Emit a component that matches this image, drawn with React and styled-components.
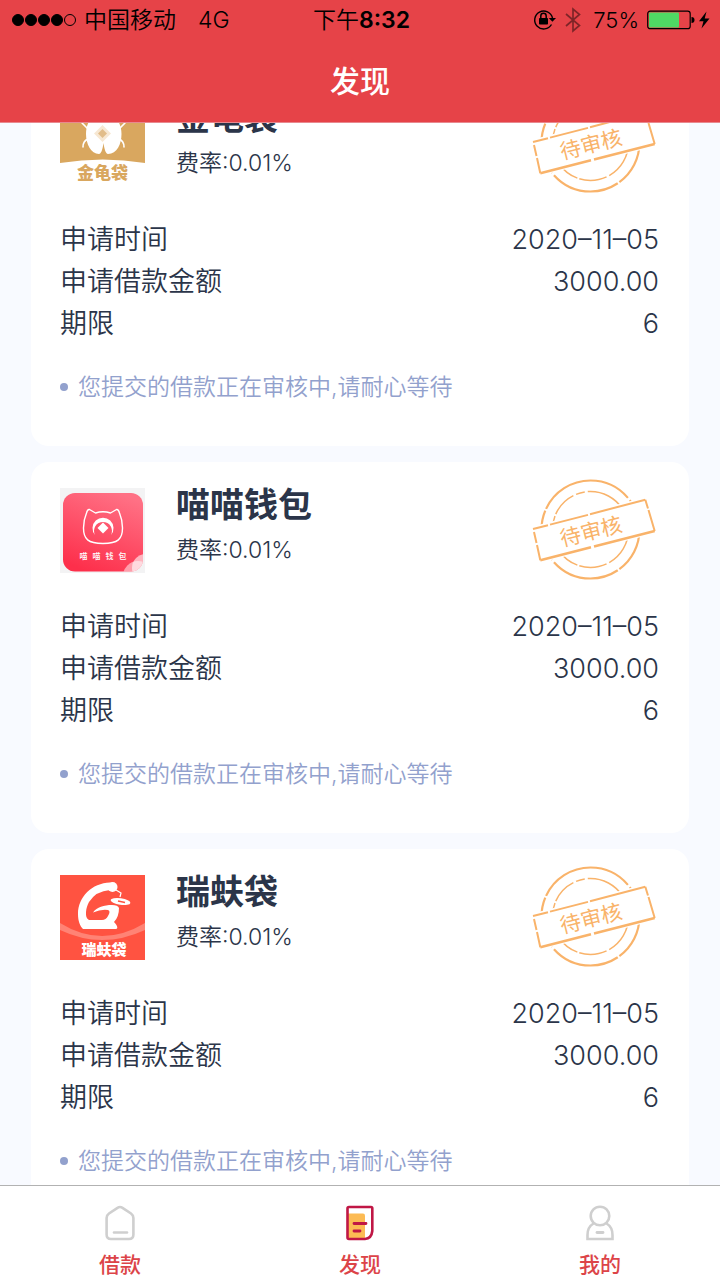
import React, { useLayoutEffect, useRef } from 'react';
import styled, { createGlobalStyle } from 'styled-components';

const records = [
    { id: 1, name: '金龟袋', logo: BeetleLogo },
    { id: 2, name: '喵喵钱包', logo: CatLogo },
    { id: 3, name: '瑞蚨袋', logo: RuifuLogo },
].map(item => ({
    ...item,
    rate: '0.01%',
    date: '2020–11–05',
    amount: '3000.00',
    term: '6',
}));

function BeetleLogo() {
    return (
        <Logo viewBox="0 0 85 85" aria-hidden="true">
            <rect width="85" height="85" fill="#fff" />
            <path d="M0 0H85V62Q43 55 0 62Z" fill="#d9a75f" />
            <g fill="none" stroke="#fff" strokeWidth="1.6" strokeLinecap="round">
                <path d="M29 20L25 14M28 28L22 22M28 38Q23 40 23 46" />
                <path d="M58 20L61 14M59 28L65 22M59 38Q64 40 64 46" />
            </g>
            <path d="M43.500 10C32 12 26 22 26 33C26 43 31 53 39 53C41 53 42.500 49 43.500 42C44.500 49 46 53 48 53C57 53 61.500 43 61.500 33C61.500 22 55 12 43.500 10Z" fill="#fff" />
            <path d="M42.500 24L51 32.500L42.500 41L34 32.500Z" fill="#f7e8d3" />
            <path d="M42.500 28L47 32.500L42.500 37L38 32.500Z" fill="#e2bd8a" />
            <LogoText x="42.500" y="78" $size={17} fill="#d9a75f">金龟袋</LogoText>
        </Logo>
    );
}

function CatLogo() {
    return (
        <Logo viewBox="0 0 85 85" aria-hidden="true">
            <defs>
                <linearGradient id="catBg" x1="0.700" y1="0" x2="0.300" y2="1">
                    <stop offset="0" stopColor="#ff7185" />
                    <stop offset="1" stopColor="#fd2f4b" />
                </linearGradient>
                <clipPath id="catClip">
                    <rect x="3" y="5" width="80" height="78.500" rx="12" />
                </clipPath>
            </defs>
            <rect width="85" height="85" fill="#f3f3f4" />
            <rect x="3" y="5" width="80" height="78.500" rx="12" fill="url(#catBg)" />
            <g clipPath="url(#catClip)">
                <circle cx="78" cy="88" r="15" fill="#fff" opacity="0.500" />
                <circle cx="86" cy="80" r="14" fill="#fff" opacity="0.600" />
            </g>
            <path d="M29.500 21.500Q27.500 21 26.500 25Q23.500 32 23.500 40C23.500 51 28 55.500 43 55.500C58 55.500 62.500 51 62.500 40Q62.500 32 59.500 25Q58.500 21 56.500 21.500L50.500 25Q43 22.500 35.500 25Z" fill="none" stroke="#fff" strokeWidth="1.400" strokeLinejoin="round" />
            <path d="M35 47A10.500 10.500 0 1 1 51 47A9 9 0 1 0 35 47Z" fill="#fff" />
            <path d="M43 34.500L48.500 40L43 45.500L37.500 40Z" fill="#fff" />
            <LogoText x="23.500 36.500 49.500 62.500" y="71" $size={8} $weight={500} fill="#fff">喵喵钱包</LogoText>
        </Logo>
    );
}

function RuifuLogo() {
    return (
        <Logo viewBox="0 0 85 85" aria-hidden="true">
            <rect width="85" height="85" fill="#ff5341" />
            <path d="M0 48Q42 74 85 48V55Q42 75 0 55Z" fill="#ff8375" />
            <path d="M50 7.500C32 8 18 22 18 39C18 46 20 51 23 54H56C58 54 58 51 54 47Q59 42 59 33Q58 30 52 30C44 30 37 32 33 37.500Q41 34 48 35Q51 36 48 41Q46 45 42 45H29C24 43 26 32 29 27Q36 16 50 15Z" fill="#fff" />
            <circle cx="52.500" cy="12" r="5" fill="#fff" />
            <path d="M56 15L61 18L60 22" fill="none" stroke="#fff" strokeWidth="1.200" />
            <ellipse cx="60.500" cy="26.500" rx="10" ry="3.300" transform="rotate(8 60.500 26.500)" fill="#fff" />
            <path d="M58 26L65 27.500" stroke="#ff5341" strokeWidth="1.500" />
            <LogoText x="44" y="80" $size={15} fill="#fff">瑞蚨袋</LogoText>
        </Logo>
    );
}

const Stamp = () => (
    <StampSvg viewBox="-2 0 128 111" role="img" aria-label="待审核">
        <g fill="none" stroke="#f9b36a">
            <circle cx="57.500" cy="54.500" r="49" strokeWidth="2.200" strokeDasharray="46 2 70 3 52 2 98 3" />
            <circle cx="57.500" cy="54.500" r="38" strokeWidth="1.500" strokeDasharray="40 3 28 2 60 2 26 3 9 3" />
        </g>
        <path d="M0 54L112.300 24.700L121.700 56L7.300 85.300Z" fill="#fff" stroke="#fff" strokeWidth="5" />
        <g fill="none" stroke="#f9b36a" strokeWidth="2">
            <path d="M0 54L15 50.300M17 49.600L55 39.900M57 39.200L112.300 24.700" />
            <path d="M112.300 24.700L115 33.500M115.500 35L121.700 56" />
            <path d="M121.700 56L61 71.500M58 72.300L7.300 85.300" strokeWidth="2.500" />
            <path d="M1 57L3.500 68M4 70L7.300 85.300" />
        </g>
        <StampText x="58" y="64" transform="rotate(-14 58 56)">待审核</StampText>
    </StampSvg>
);

const StatusIcons = () => (
    <>
        <svg width="24" height="24" viewBox="0 0 24 24" aria-hidden="true">
            <path d="M18.500 16.500A9 9 0 1 1 19.500 10" fill="none" stroke="#000" strokeWidth="1.400" />
            <path d="M15.800 10H23L19.400 13.800Z" />
            <rect x="6" y="10" width="9" height="6.500" rx="0.800" />
            <path d="M7.800 10V8A2.700 2.700 0 0 1 13.200 8V10" fill="none" stroke="#000" strokeWidth="1.500" />
        </svg>
        <svg width="16" height="26" viewBox="0 0 16 26" aria-hidden="true">
            <path d="M1 7L14.500 18.500L8 24V2L14.500 7.500L1 19" fill="none" stroke="#000" strokeOpacity="0.450" strokeWidth="1.700" />
        </svg>
    </>
);

const Battery = () => (
    <svg width="64" height="20" viewBox="0 0 64 20" aria-hidden="true">
        <rect x="0.700" y="1.200" width="42.500" height="17.500" rx="2.500" fill="none" stroke="#000" strokeWidth="1.200" />
        <rect x="2" y="2.500" width="30" height="15" rx="1" fill="#4fd964" />
        <path d="M44.500 7Q47.500 7 47.500 10Q47.500 13 44.500 13Z" />
        <path d="M59.500 1.500L52 11.200H56.500L54.500 18.500L62.500 8.500H57.700Z" />
    </svg>
);

const HomeIcon = () => (
    <TabSvg viewBox="0 0 32 36" aria-hidden="true">
        <path d="M13.500 2.800Q16 1.300 18.500 2.800L27 8.500Q29.400 10.300 29.400 13V29.500Q29.400 34 25 34H7Q2.600 34 2.600 29.500V13Q2.600 10.300 5 8.500Z" fill="none" stroke="#cfcfcf" strokeWidth="2.600" />
        <path d="M10 27.500H23" stroke="#cfcfcf" strokeWidth="2.600" strokeLinecap="round" />
    </TabSvg>
);

const FindIcon = () => (
    <TabSvg viewBox="0 0 32 36" aria-hidden="true">
        <path d="M4 8.500H19Q21 8.500 21 10.500V33H4Z" fill="#fcbb54" />
        <path d="M5 2H27Q28.300 2 28.300 3.300V26Q27.500 33.500 21 34H5Q3.500 34 3.500 32.500V3.500Q3.500 2 5 2Z" fill="none" stroke="#c01745" strokeWidth="2.600" />
        <path d="M10 18.500H22M10 26H16" stroke="#c01745" strokeWidth="2.800" strokeLinecap="round" />
    </TabSvg>
);

const MineIcon = () => (
    <TabSvg viewBox="0 0 32 36" aria-hidden="true">
        <circle cx="16" cy="11" r="9.300" fill="none" stroke="#cfcfcf" strokeWidth="2.600" />
        <path d="M9.500 18.500Q3.500 22 3.500 30V34H28.500V30Q28.500 22 22.500 18.500" fill="none" stroke="#cfcfcf" strokeWidth="2.600" />
        <path d="M13 27.500H19" stroke="#cfcfcf" strokeWidth="2.800" strokeLinecap="round" />
    </TabSvg>
);

const LoanCard = ({ record }) => {
    const RecordLogo = record.logo;
    return (
        <Card>
            <CardHead>
                <RecordLogo />
                <Titles>
                    <Name>{record.name}</Name>
                    <Rate>费率:{record.rate}</Rate>
                </Titles>
                <Stamp />
            </CardHead>
            <Details>
                <Row><dt>申请时间</dt><dd>{record.date}</dd></Row>
                <Row><dt>申请借款金额</dt><dd>{record.amount}</dd></Row>
                <Row><dt>期限</dt><dd>{record.term}</dd></Row>
            </Details>
            <Notice>您提交的借款正在审核中,请耐心等待</Notice>
        </Card>
    );
};

const App = () => {
    const listRef = useRef(null);

    useLayoutEffect(() => {
        listRef.current.scrollTop = 64;
    }, []);

    return (
        <Page>
            <GlobalStyle />
            <Header>
                <StatusBar>
                    <StatusSide>
                        <Signal>
                            <Dot /><Dot /><Dot /><Dot /><Dot $empty />
                        </Signal>
                        <span>中国移动</span>
                        <Network>4G</Network>
                    </StatusSide>
                    <Time>下午<b>8:32</b></Time>
                    <StatusSide $end>
                        <StatusIcons />
                        <Percent>75%</Percent>
                        <Battery />
                    </StatusSide>
                </StatusBar>
                <Title>发现</Title>
            </Header>
            <List ref={listRef}>
                {records.map(record => <LoanCard key={record.id} record={record} />)}
            </List>
            <TabBar>
                <Tab href="#loan"><HomeIcon />借款</Tab>
                <Tab href="#find" aria-current="page"><FindIcon />发现</Tab>
                <Tab href="#mine"><MineIcon />我的</Tab>
            </TabBar>
        </Page>
    );
};

export default App;

const GlobalStyle = createGlobalStyle`
    * {
        box-sizing: border-box;
    }
    body {
        margin: 0;
        background: #f8faff;
        color: #2b3549;
        font-family: Inter, "Noto Sans CJK SC", sans-serif;
    }
    h1, h2, p, dl, dd {
        margin: 0;
    }
`;

const Page = styled.div`
    display: flex;
    flex-direction: column;
    height: 100vh;
`;

//Header
const Header = styled.header`
    flex: none;
    background: #e64348;
    border-bottom: 1px solid #e8898f;
`;

const StatusBar = styled.div`
    display: grid;
    grid-template-columns: 1fr auto 1fr;
    align-items: center;
    height: 40px;
    padding: 0 9px 0 12px;
    color: #000;
    font-size: 23px;
    font-weight: 350;
    line-height: 40px;
`;

const StatusSide = styled.div`
    display: flex;
    align-items: center;
    justify-content: ${props => props.$end ? 'flex-end' : 'flex-start'};
    gap: 8px;
`;

const Signal = styled.div`
    display: flex;
    gap: 1px;
`;

const Dot = styled.span`
    width: 12px;
    height: 12px;
    border: 1px solid #000;
    border-radius: 50%;
    background: ${props => props.$empty ? 'transparent' : '#000'};
`;

const Network = styled.span`
    margin-left: 14px;
`;

const Time = styled.span`
    b {
        font-weight: 600;
    }
`;

const Percent = styled.span`
    margin-left: 4px;
    font-size: 22px;
`;

const Title = styled.h1`
    color: #fff;
    font-size: 30px;
    font-weight: 500;
    line-height: 82px;
    text-align: center;
`;

//Card list
const List = styled.main`
    display: flex;
    flex: 1;
    flex-direction: column;
    gap: 16px;
    min-height: 0;
    padding: 16px 31px;
    overflow-y: auto;
    scrollbar-width: none;
`;

const Card = styled.section`
    flex: none;
    padding: 26px 30px 41px 29px;
    border-radius: 18px;
    background: #fff;
`;

const CardHead = styled.div`
    display: flex;
    align-items: flex-start;
    margin-bottom: 33px;
`;

const Logo = styled.svg`
    flex: none;
    width: 85px;
    height: 85px;
`;

const LogoText = styled.text`
    font-family: "Noto Sans CJK SC", sans-serif;
    font-size: ${props => props.$size}px;
    font-weight: ${props => props.$weight || 900};
    text-anchor: middle;
`;

const Titles = styled.div`
    flex: 1;
    margin-left: 31px;
`;

const Name = styled.h2`
    font-size: 34px;
    font-weight: 700;
    line-height: 34px;
`;

const Rate = styled.p`
    margin-top: 14px;
    font-size: 23px;
    font-weight: 350;
    line-height: 28px;
`;

const StampSvg = styled.svg`
    flex: none;
    width: 128px;
    height: 111px;
    margin: -13px 0;
`;

const StampText = styled.text`
    fill: #f9b36a;
    font-family: "Noto Sans CJK SC", sans-serif;
    font-size: 21px;
    text-anchor: middle;
`;

const Details = styled.dl`
    font-size: 27px;
    font-weight: 350;
    line-height: 42px;
`;

const Row = styled.div`
    display: flex;
    justify-content: space-between;
`;

const Notice = styled.p`
    display: flex;
    align-items: center;
    gap: 10px;
    margin-top: 24px;
    color: #92a1cd;
    font-size: 23px;
    font-weight: 350;
    line-height: 36px;

    &::before {
        content: "";
        width: 8px;
        height: 8px;
        border-radius: 50%;
        background: #92a1cd;
    }
`;

//Bottom tabs
const TabBar = styled.nav`
    display: flex;
    flex: none;
    border-top: 1px solid #b2b2b2;
    background: #fff;
`;

const Tab = styled.a`
    display: flex;
    flex: 1;
    flex-direction: column;
    align-items: center;
    padding-top: 19px;
    color: #dc4448;
    font-size: 21px;
    font-weight: 500;
    line-height: 30px;
    text-decoration: none;
`;

const TabSvg = styled.svg`
    width: 32px;
    height: 36px;
    margin-bottom: 9px;
`;
